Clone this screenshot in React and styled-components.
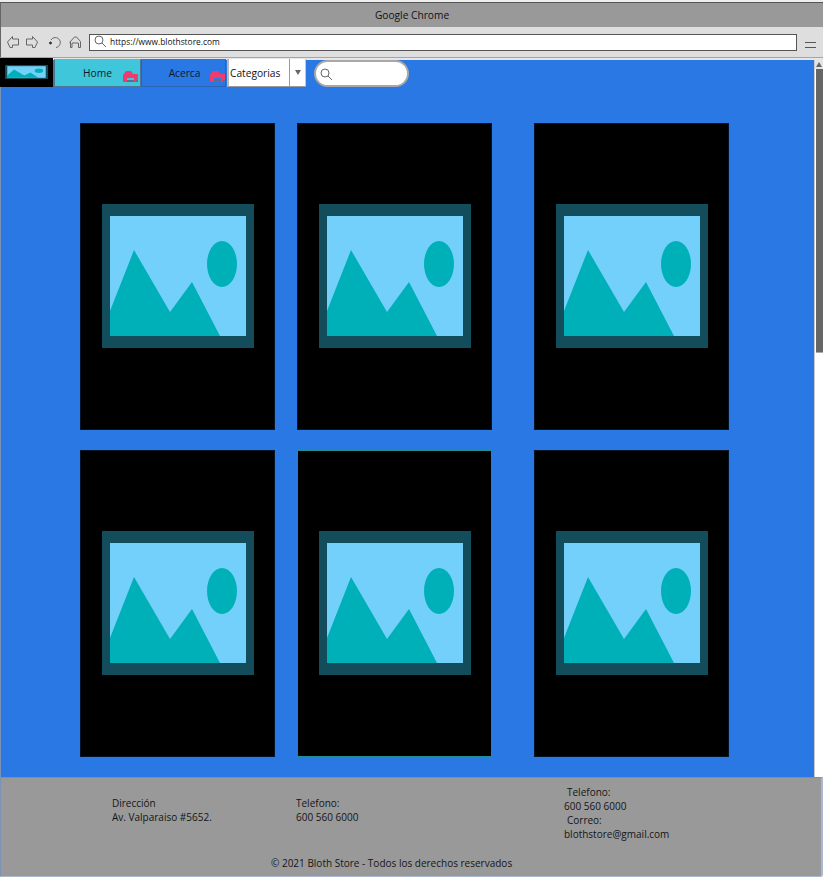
import React from 'react';
import styled, { createGlobalStyle } from 'styled-components';

const Global = createGlobalStyle`
  html, body { margin: 0; padding: 0; background: #fff; overflow: hidden; }
  * { box-sizing: border-box; }
`;

const Frame = styled.div`
  width: 823px;
  height: 877px;
  display: flex;
  flex-direction: column;
  padding-top: 2px;
  background: #eee;
  font-family: "Open Sans", "Noto Sans", sans-serif;
  font-size: 10px;
  color: #111;
`;
const TitleBar = styled.div`
  height: 25px;
  flex: none;
  display: flex;
  align-items: center;
  justify-content: center;
  background: #999;
  border-top: 1px solid #555;
  border-left: 1px solid #666;
  font-size: 10.2px;
`;
const Toolbar = styled.div`
  height: 30px;
  flex: none;
  display: flex;
  align-items: center;
  padding: 0 7px 0 6px;
  background: #dedede;
  border-left: 1px solid #666;
`;
const ToolIcon = styled.svg`
  flex: none;
  width: ${(p) => p.$w || 12}px;
  height: 12px;
  margin-right: ${(p) => p.$gap || 0}px;
  fill: none;
  stroke: #666;
  stroke-width: 1;
`;
const Address = styled.div`
  width: 708px;
  height: 17px;
  margin-left: 8px;
  flex: none;
  display: flex;
  align-items: center;
  gap: 4px;
  padding-left: 4px;
  padding-bottom: 2px;
  background: #fff;
  border: 1px solid #555;
  font-size: 8.4px;
`;
const Menu = styled.div`
  margin-left: 8px;
  margin-top: 5px;
  width: 11px;
  height: 6px;
  border-top: 1px solid #555;
  border-bottom: 1px solid #555;
`;
const Divider = styled.div`
  height: 3px;
  flex: none;
  background: #e6e6e6;
  border-top: 1px solid #a5a5a5;
`;
const Body = styled.div`
  height: 717px;
  flex: none;
  display: flex;
`;
const Main = styled.main`
  width: 814px;
  flex: none;
  background: #2a78e4;
  border-left: 1px solid #7d93b5;
`;
const Nav = styled.nav`
  height: 29px;
  margin-top: -2px;
  display: flex;
  align-items: stretch;
`;
const Logo = styled.div`
  width: 53px;
  margin-left: -1px;
  margin-right: 1px;
  background: #000;
  display: flex;
  align-items: center;
  padding: 0 0 1px 5px;
`;
const NavLink = styled.a`
  position: relative;
  width: ${(p) => p.$w}px;
  margin-top: 1px;
  padding-left: ${(p) => p.$pad || 0}px;
  display: flex;
  align-items: center;
  justify-content: center;
  background: ${(p) => p.$bg};
  border: 1px solid ${(p) => p.$line};
  border-top-color: ${(p) => p.$bg};
  font-size: 10.2px;
  color: #0c1a2b;
`;
const Badge = styled.svg`
  position: absolute;
  right: ${(p) => p.$right}px;
  top: 11px;
  width: 15px;
  height: 11px;
`;
const Select = styled.div`
  width: 79px;
  margin-left: 1px;
  margin-top: 1px;
  display: flex;
  background: #fff;
  border-left: 2px solid #b8b8b8;
  border-bottom: 1px solid #9a9a9a;
`;
const SelectText = styled.div`
  width: 60px;
  display: flex;
  align-items: center;
  padding-left: 1px;
  font-size: 10.2px;
`;
const SelectArrow = styled.div`
  flex: 1;
  display: flex;
  align-items: center;
  justify-content: center;
  border-left: 1px solid #9a9a9a;
  border-right: 1px solid #c8c8c8;
  &::after {
    content: "";
    border-left: 3px solid transparent;
    border-right: 3px solid transparent;
    border-top: 5px solid #666;
  }
`;
const Search = styled.div`
  width: 95px;
  height: 27px;
  margin-left: 8px;
  margin-top: 2px;
  display: flex;
  align-items: center;
  padding-left: 4px;
  background: #fff;
  border: 2px solid #a8a8a8;
  border-radius: 14px;
`;
const Grid = styled.section`
  display: grid;
  grid-template-columns: 217px 237px 195px;
  grid-auto-rows: 307px;
  row-gap: 20px;
  padding: 36px 0 0 79px;
`;
const Card = styled.article`
  width: 195px;
  padding-bottom: 1px;
  display: flex;
  align-items: center;
  justify-content: center;
  background: #000;
  border: 1px solid ${(p) => (p.$active ? '#1f8f8f' : '#06142a')};
`;
const Picture = styled.svg`
  display: block;
  flex: none;
`;
const Scrollbar = styled.aside`
  flex: 1;
  display: flex;
  flex-direction: column;
  align-items: center;
  background: #fff;
  border-left: 1px solid #c9c9c9;
`;
const ScrollButton = styled.div`
  width: 100%;
  height: 9px;
  display: flex;
  align-items: center;
  justify-content: center;
  background: #e4e4e4;
  &::after {
    content: "";
    border-left: 3px solid transparent;
    border-right: 3px solid transparent;
    border-bottom: 5px solid #666;
  }
`;
const ScrollThumb = styled.div`
  width: 7px;
  height: 284px;
  background: #666;
  border-bottom: 1px solid #aaa;
`;
const Footer = styled.footer`
  height: 100px;
  flex: none;
  display: flex;
  flex-direction: column;
  background: #999;
  border-top: 1px solid #8c8c8c;
  border-left: 1px solid #7d93b5;
  border-right: 2px solid #a9b8cf;
  border-bottom: 1px solid #a9b8cf;
  border-bottom-right-radius: 3px;
  color: #151515;
`;
const Columns = styled.div`
  display: grid;
  grid-template-columns: 184px 268px auto;
  padding: 7px 0 0 111px;
  height: 78px;
`;
const Column = styled.div`
  padding-top: ${(p) => p.$top || 0}px;
  line-height: 14px;
`;
const Line = styled.div`
  padding-left: ${(p) => p.$indent || 0}px;
`;
const Copy = styled.div`
  padding-left: 270px;
  line-height: 14px;
`;

const Placeholder = ({ width = 152, height = 144, stretch }) => (
  <Picture width={width} height={height} viewBox="0 0 152 144" preserveAspectRatio={stretch ? 'none' : undefined}>
    <rect width="152" height="144" fill="#134d5b" />
    <rect x="8" y="12" width="136" height="120" fill="#72d0fb" />
    <ellipse cx="120" cy="60" rx="15" ry="23" fill="#00b0b8" />
    <path d="M8 107 L32 46 L68 108 L90 78 L118 132 L8 132 Z" fill="#00b0b8" />
  </Picture>
);

const HomeBadge = ({ right }) => (
  <Badge $right={right} viewBox="0 0 15 11">
    <path d="M0 11V4L3 0H8L10 3H15V11H11V7H4V11Z" fill="#f23a6e" />
    <path d="M4 9H11V11H4Z M13 9H15V11H13Z" fill="#5f6d8a" />
  </Badge>
);

const Lens = ({ gap }) => (
  <ToolIcon $gap={gap} viewBox="0 0 12 12">
    <circle cx="5" cy="5" r="4" />
    <path d="M8 8L12 12" />
  </ToolIcon>
);

const items = [1, 2, 3, 4, 5, 6];

export default function App() {
  return (
    <Frame>
      <Global />
      <TitleBar>Google Chrome</TitleBar>
      <Toolbar>
        <ToolIcon $gap={7} viewBox="0 0 12 12"><path d="M5.5 .5L.5 6L3 11.5H5.5V9H11.5V3H5.5Z" /></ToolIcon>
        <ToolIcon $gap={11} viewBox="0 0 12 12"><path d="M6.5 .5L11.5 6L9 11.5H6.5V9H.5V3H6.5Z" /></ToolIcon>
        <ToolIcon $gap={8} viewBox="0 0 12 12">
          <path d="M2 4A5 5 0 1 1 7 11.5" />
          <circle cx="1.5" cy="7" r="1" fill="#333" stroke="#333" />
        </ToolIcon>
        <ToolIcon viewBox="0 0 12 12"><path d="M.5 6.5L5.5 1H7.5L11.5 5.5V11.5H9.5V7H3V11.5H1.5V6" /></ToolIcon>
        <Address>
          <Lens />
          https://www.blothstore.com
        </Address>
        <Menu />
      </Toolbar>
      <Divider />
      <Body>
        <Main>
          <Nav>
            <Logo><Placeholder width={43} height={14} stretch /></Logo>
            <NavLink $w={87} $bg="#3fc6da" $line="#4c7698">Home<HomeBadge right={2} /></NavLink>
            <NavLink $w={85} $pad={2} $bg="#2a78e4" $line="#2b64b4">Acerca<HomeBadge right={0} /></NavLink>
            <Select>
              <SelectText>Categorias</SelectText>
              <SelectArrow />
            </Select>
            <Search><Lens /></Search>
          </Nav>
          <Grid>
            {items.map((i) => (
              <Card key={i} $active={i === 5}><Placeholder /></Card>
            ))}
          </Grid>
        </Main>
        <Scrollbar>
          <ScrollButton />
          <ScrollThumb />
        </Scrollbar>
      </Body>
      <Footer>
        <Columns>
          <Column $top={11}>
            <Line>Dirección</Line>
            <Line>Av. Valparaiso #5652.</Line>
          </Column>
          <Column $top={11}>
            <Line>Telefono:</Line>
            <Line>600 560 6000</Line>
          </Column>
          <Column>
            <Line $indent={3}>Telefono:</Line>
            <Line>600 560 6000</Line>
            <Line $indent={3}>Correo:</Line>
            <Line>blothstore@gmail.com</Line>
          </Column>
        </Columns>
        <Copy>© 2021 Bloth Store - Todos los derechos reservados</Copy>
      </Footer>
    </Frame>
  );
}
